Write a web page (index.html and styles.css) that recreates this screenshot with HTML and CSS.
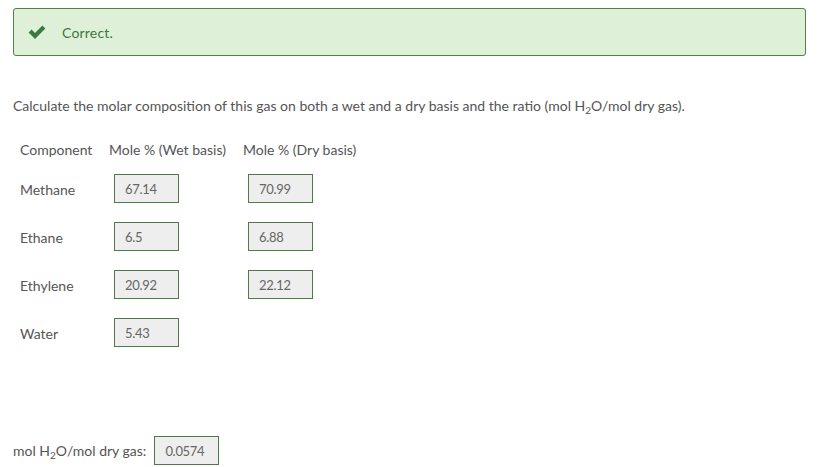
FILE: index.html
```html
<!DOCTYPE html>
<html>
<head>
<meta charset="utf-8">
<link rel="stylesheet" href="styles.css">
</head>
<body>
<div class="page">
  <div class="alert">
    <svg class="check" width="18" height="14" viewBox="0 0 18 14"><path d="M0.6 7.6 L3.6 4.6 L7 8 L14.4 0.6 L17.4 3.6 L7 14 Z" fill="#3d7a3f"/></svg>
    <span class="alert-text">Correct.</span>
  </div>
  <p class="question">Calculate the molar composition of this gas on both a wet and a dry basis and the ratio (mol H<sub>2</sub>O/mol dry gas).</p>
  <div class="grid">
    <div class="hd">Component</div>
    <div class="hd">Mole % (Wet basis)</div>
    <div class="hd">Mole % (Dry basis)</div>

    <div class="lbl">Methane</div>
    <div class="cell"><span class="box">67.14</span></div>
    <div class="cell"><span class="box">70.99</span></div>

    <div class="lbl">Ethane</div>
    <div class="cell"><span class="box">6.5</span></div>
    <div class="cell"><span class="box">6.88</span></div>

    <div class="lbl">Ethylene</div>
    <div class="cell"><span class="box">20.92</span></div>
    <div class="cell"><span class="box">22.12</span></div>

    <div class="lbl">Water</div>
    <div class="cell"><span class="box">5.43</span></div>
    <div class="cell"></div>
  </div>
  <div class="ratio">
    <span class="ratio-lbl">mol H<sub>2</sub>O/mol dry gas:</span>
    <span class="box">0.0574</span>
  </div>
</div>
</body>
</html>
```
FILE: styles.css
```css
html, body {
  margin: 0;
  padding: 0;
  background: #fff;
}
body {
  font-family: Lato, "Open Sans", sans-serif;
  font-size: 14px;
  color: #555;
}
.page {
  padding: 8px 14px 0 13px;
}
.alert {
  box-sizing: border-box;
  height: 48px;
  border: 1px solid #4e8546;
  border-radius: 3px;
  background: #dff0d8;
  display: flex;
  align-items: center;
  padding-left: 14px;
}
.check {
  display: block;
  margin-right: 16px;
}
.alert-text {
  color: #3c763d;
  font-size: 14px;
  letter-spacing: 0.2px;
}
.question {
  margin: 41px 0 0 0;
  line-height: 17px;
}
sub {
  font-size: 10px;
  line-height: 0;
  vertical-align: -3px;
}
.grid {
  display: grid;
  grid-template-columns: 89px 134px 120px;
  grid-template-rows: 12px repeat(4, 29px);
  row-gap: 19px;
  margin: 29px 0 0 7px;
  align-items: center;
}
.hd {
  line-height: 17px;
  white-space: nowrap;
}
.cell {
  padding-left: 5px;
  height: 29px;
}
.lbl {
  line-height: 17px;
  margin-top: 2px;
}
.box {
  box-sizing: border-box;
  display: inline-flex;
  align-items: center;
  width: 65px;
  height: 29px;
  padding-left: 10px;
  border: 1px solid #4d7a45;
  background: #eeeeee;
  color: #666;
  font-size: 13px;
  letter-spacing: -0.3px;
}
.ratio {
  display: flex;
  align-items: center;
  margin-top: 89px;
}
.ratio-lbl {
  margin-right: 8px;
}
```
